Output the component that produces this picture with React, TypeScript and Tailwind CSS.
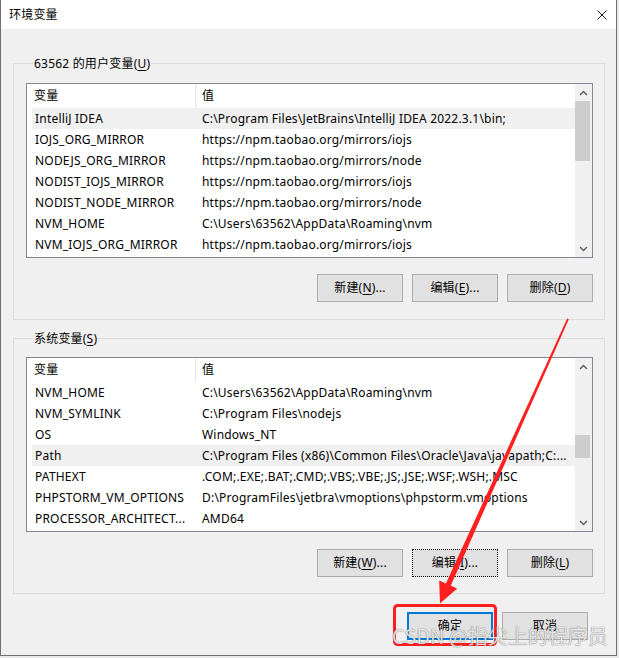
import clsx from 'clsx';

type Row = { name: string; value: string; selected?: boolean };

const userVars: Row[] = [
  { name: 'IntelliJ IDEA', value: 'C:\\Program Files\\JetBrains\\IntelliJ IDEA 2022.3.1\\bin;', selected: true },
  { name: 'IOJS_ORG_MIRROR', value: 'https://npm.taobao.org/mirrors/iojs' },
  { name: 'NODEJS_ORG_MIRROR', value: 'https://npm.taobao.org/mirrors/node' },
  { name: 'NODIST_IOJS_MIRROR', value: 'https://npm.taobao.org/mirrors/iojs' },
  { name: 'NODIST_NODE_MIRROR', value: 'https://npm.taobao.org/mirrors/node' },
  { name: 'NVM_HOME', value: 'C:\\Users\\63562\\AppData\\Roaming\\nvm' },
  { name: 'NVM_IOJS_ORG_MIRROR', value: 'https://npm.taobao.org/mirrors/iojs' },
];

const systemVars: Row[] = [
  { name: 'NVM_HOME', value: 'C:\\Users\\63562\\AppData\\Roaming\\nvm' },
  { name: 'NVM_SYMLINK', value: 'C:\\Program Files\\nodejs' },
  { name: 'OS', value: 'Windows_NT' },
  { name: 'Path', value: 'C:\\Program Files (x86)\\Common Files\\Oracle\\Java\\javapath;C:...', selected: true },
  { name: 'PATHEXT', value: '.COM;.EXE;.BAT;.CMD;.VBS;.VBE;.JS;.JSE;.WSF;.WSH;.MSC' },
  { name: 'PHPSTORM_VM_OPTIONS', value: 'D:\\ProgramFiles\\jetbra\\vmoptions\\phpstorm.vmoptions' },
  { name: 'PROCESSOR_ARCHITECT...', value: 'AMD64' },
];

function Chevron({ down }: { down?: boolean }) {
  return (
    <svg width="9" height="6" viewBox="0 0 9 6">
      <polyline
        points={down ? '1,1 4.5,4.5 8,1' : '1,5 4.5,1.5 8,5'}
        fill="none"
        stroke="#606060"
        strokeWidth="1.5"
      />
    </svg>
  );
}

function ListView({ rows, thumb }: { rows: Row[]; thumb: string }) {
  return (
    <div className="flex h-[175px] border border-[#828790] bg-white">
      <div className="flex min-w-0 flex-1 flex-col">
        {/* header */}
        <div className="flex h-[24px] shrink-0 items-center">
          <div className="flex h-full w-[169px] items-center border-r border-[#e5e5e5] pl-[7px]">变量</div>
          <div className="pl-[6px]">值</div>
        </div>
        {rows.map((r) => (
          <div
            key={r.name}
            className={clsx('ml-[5px] flex h-[21px] shrink-0 items-center', r.selected && 'bg-[#f0f0f0]')}
          >
            <div className="w-[163px] shrink-0 overflow-hidden whitespace-nowrap pl-[3px]">{r.name}</div>
            <div className="min-w-0 flex-1 overflow-hidden whitespace-nowrap pl-[7px]">{r.value}</div>
          </div>
        ))}
      </div>
      {/* scrollbar */}
      <div className="flex w-[17px] shrink-0 flex-col bg-[#f0f0f0]">
        <div className="flex h-[17px] shrink-0 items-center justify-center">
          <Chevron />
        </div>
        <div className="flex-1">
          <div className={clsx('w-[15px] bg-[#cdcdcd]', thumb)} />
        </div>
        <div className="flex h-[17px] shrink-0 items-center justify-center">
          <Chevron down />
        </div>
      </div>
    </div>
  );
}

function Btn({ children, focus, primary }: { children: React.ReactNode; focus?: boolean; primary?: boolean }) {
  return (
    <div
      className={clsx(
        'flex h-[28px] w-[86px] items-center justify-center bg-[#e1e1e1]',
        primary ? 'border-2 border-[#0078d7]' : focus ? 'border border-dotted border-black' : 'border border-[#adadad]'
      )}
    >
      {children}
    </div>
  );
}

function Key({ k }: { k: string }) {
  return <span className="underline underline-offset-[2px]">{k}</span>;
}

export default function App() {
  return (
    <div className="relative h-[658px] w-[619px] overflow-hidden bg-[#e9e9e9] font-['Noto_Sans','Noto_Sans_CJK_SC',sans-serif] text-[12px] tracking-[0.2px] text-black">
      <div className="flex h-[656px] w-[617px] flex-col border-x border-b border-[#707070] bg-[#f0f0f0]">
        {/* title bar */}
        <div className="flex h-[29px] shrink-0 items-center justify-between bg-white pl-[8px] pr-[9px]">
          <span>环境变量</span>
          <svg width="10" height="10" viewBox="0 0 10 10">
            <path d="M0.5 0.5 L9.5 9.5 M9.5 0.5 L0.5 9.5" stroke="#1a1a1a" strokeWidth="1" />
          </svg>
        </div>

        <div className="flex flex-col pl-[12px] pr-[11px] pt-[26px]">
          <fieldset className="border border-[#dcdcdc] pb-[17px] pl-[12px] pr-[11px]">
            <legend className="ml-[7px] px-[1px] leading-[17px]">
              63562 的用户变量(<Key k="U" />)
            </legend>
            <div className="mt-[11px]">
              <ListView rows={userVars} thumb="h-[60px]" />
            </div>
            <div className="mt-[16px] flex justify-end gap-[9px]">
              <Btn>
                新建(<Key k="N" />)...
              </Btn>
              <Btn>
                编辑(<Key k="E" />)...
              </Btn>
              <Btn>
                删除(<Key k="D" />)
              </Btn>
            </div>
          </fieldset>

          <fieldset className="mt-[10px] border border-[#dcdcdc] pb-[16px] pl-[12px] pr-[11px]">
            <legend className="ml-[7px] px-[1px] leading-[17px]">
              系统变量(<Key k="S" />)
            </legend>
            <div className="mt-[10px]">
              <ListView rows={systemVars} thumb="mt-[60px] h-[23px]" />
            </div>
            <div className="mt-[17px] flex justify-end gap-[9px]">
              <Btn>
                新建(<Key k="W" />)...
              </Btn>
              <Btn focus>
                编辑(<Key k="I" />)...
              </Btn>
              <Btn>
                删除(<Key k="L" />)
              </Btn>
            </div>
          </fieldset>

          <div className="mr-[17px] mt-[18px] flex justify-end gap-[9px]">
            <Btn primary>确定</Btn>
            <Btn>取消</Btn>
          </div>
        </div>
      </div>

      {/* red annotation drawn over the screenshot */}
      <svg className="pointer-events-none absolute left-0 top-0" width="619" height="658" viewBox="0 0 619 658">
        <polygon points="567.2,318.5 568.8,319.3 450.6,585.9 445.8,583.7" fill="#ff1f1f" />
        <polygon points="440,603.5 439.2,580.5 457.2,588.6" fill="#ff1f1f" />
        <rect x="394.5" y="605.5" width="101" height="39" rx="3" fill="none" stroke="#ff1f1f" strokeWidth="3" />
      </svg>

      {/* watermark */}
      <div className="pointer-events-none absolute left-[392px] top-[626px] whitespace-nowrap font-['Noto_Sans_CJK_SC',sans-serif] text-[20px] leading-[20px] tracking-normal text-white/85 [text-shadow:0_0_1px_rgba(0,0,0,0.75)]">
        CSDN @指尖上的程序员
      </div>
    </div>
  );
}
